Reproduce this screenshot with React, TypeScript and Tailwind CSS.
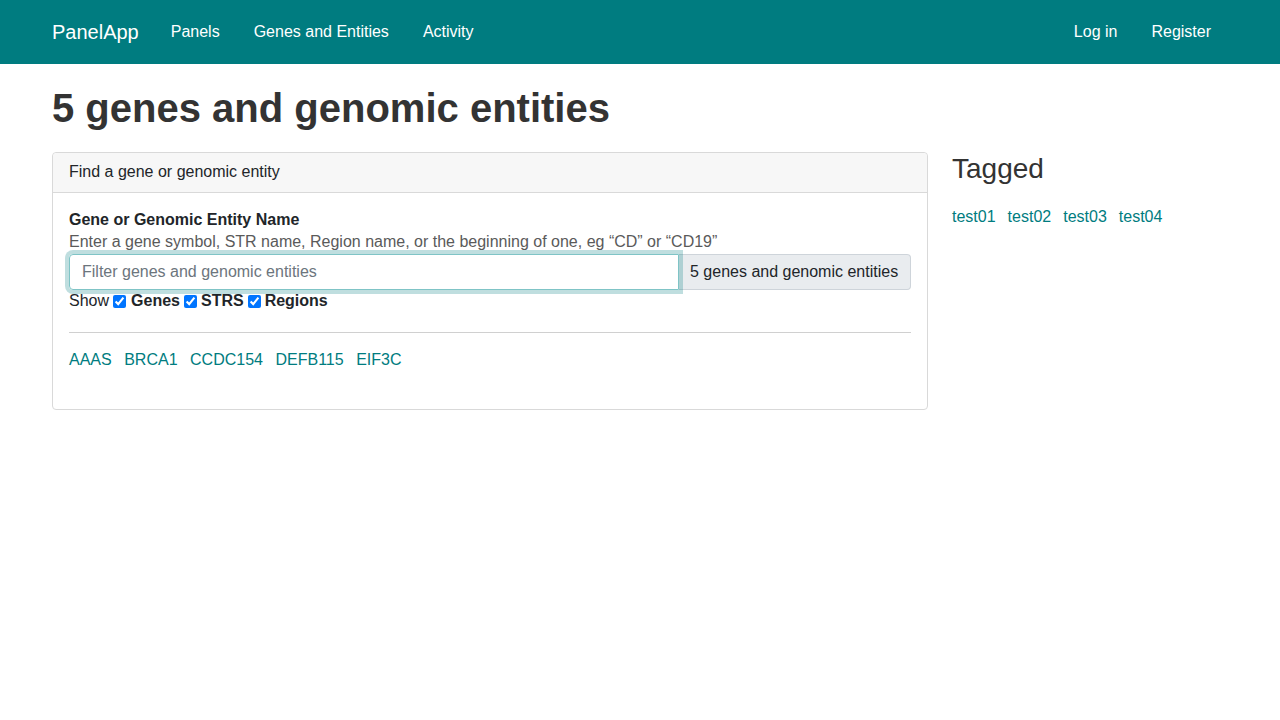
import React from "react";

const genes = ["AAAS", "BRCA1", "CCDC154", "DEFB115", "EIF3C"];
const tags = ["test01", "test02", "test03", "test04"];

function Navbar() {
  return (
    <nav className="h-16 bg-[#007c80] text-white">
      <div className="mx-auto flex h-full w-[1200px] items-center px-3">
        <a href="#" className="mr-[15px] text-[20px] leading-[30px]">
          PanelApp
        </a>
        <ul className="flex text-base">
          <li><a href="#" className="block px-[17px] py-2">Panels</a></li>
          <li><a href="#" className="block px-[17px] py-2">Genes and Entities</a></li>
          <li><a href="#" className="block px-[17px] py-2">Activity</a></li>
        </ul>
        <ul className="ml-auto flex text-base">
          <li><a href="#" className="block px-[17px] py-2">Log in</a></li>
          <li><a href="#" className="block px-[17px] py-2">Register</a></li>
        </ul>
      </div>
    </nav>
  );
}

function SearchCard() {
  return (
    <div className="rounded border border-[#d9d9d9]">
      <div className="h-10 rounded-t border-b border-[#d9d9d9] bg-[#f7f7f7] px-4 pt-[7px] pb-[9px] leading-6 text-[#212529]">
        Find a gene or genomic entity
      </div>
      <div className="px-4 pt-4 pb-[37px]">
        <label className="block font-bold leading-[22px] text-[#212529]">
          Gene or Genomic Entity Name
        </label>
        <p className="leading-[22px] text-[#5a5a5a]">
          Enter a gene symbol, STR name, Region name, or the beginning of one, eg “CD” or “CD19”
        </p>
        <div className="mt-[1px] flex h-9">
          <input
            type="text"
            placeholder="Filter genes and genomic entities"
            className="relative z-10 w-[610px] rounded-l border border-[#7fc4c6] px-3 text-base text-[#495057] shadow-[0_0_0_4px_rgba(0,124,128,0.25)] outline-none placeholder:text-[#6c757d]"
          />
          <span className="flex flex-1 items-center rounded-r border border-l-0 border-[#ced4da] bg-[#e9ecef] px-[11px] text-[#212529]">
            5 genes and genomic entities
          </span>
        </div>
        <div className="flex items-center pt-[1px] leading-[20px] text-[#212529]">
          <span>Show</span>
          <input type="checkbox" defaultChecked className="ml-1 mr-[5px] h-[13px] w-[13px]" />
          <b>Genes</b>
          <input type="checkbox" defaultChecked className="mx-1 h-[13px] w-[13px]" />
          <b>STRS</b>
          <input type="checkbox" defaultChecked className="mx-1 h-[13px] w-[13px]" />
          <b>Regions</b>
        </div>
        <hr className="mt-[21px] border-t border-[#d0d0d0]" />
        <div className="mt-[15px] flex leading-6">
          {genes.map((g) => (
            <a key={g} href="#" className="mr-[12.5px] text-[#007c80]">
              {g}
            </a>
          ))}
        </div>
      </div>
    </div>
  );
}

export default function App() {
  return (
    <div className="min-h-screen bg-white font-['Liberation_Sans',Arial,sans-serif] text-base text-[#212529]">
      <Navbar />
      <main className="mx-auto w-[1200px] px-3 pt-5">
        <h1 className="mb-5 text-[40px] font-bold leading-[48px] text-[#333333]">
          5 genes and genomic entities
        </h1>
        <div className="flex gap-6">
          <div className="w-[876px]">
            <SearchCard />
          </div>
          <div className="flex-1">
            <h3 className="mb-[19px] text-[28px] leading-[34px] text-[#333333]">Tagged</h3>
            <div className="flex leading-6">
              {tags.map((t) => (
                <a key={t} href="#" className="mr-3 text-[#007c80]">
                  {t}
                </a>
              ))}
            </div>
          </div>
        </div>
      </main>
    </div>
  );
}
